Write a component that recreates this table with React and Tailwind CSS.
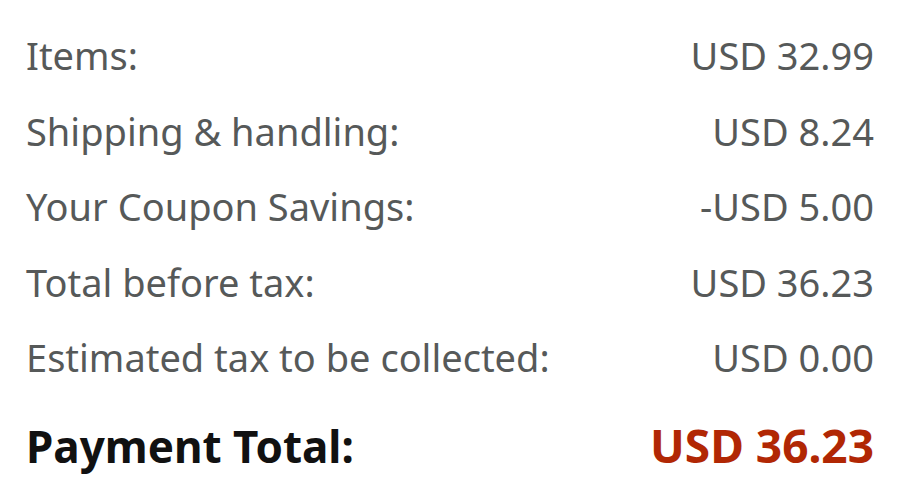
import React from "react";

const rows = [
  { label: "Items:", value: "USD 32.99" },
  { label: "Shipping & handling:", value: "USD 8.24" },
  { label: "Your Coupon Savings:", value: "-USD 5.00" },
  { label: "Total before tax:", value: "USD 36.23" },
  { label: "Estimated tax to be collected:", value: "USD 0.00" },
];

const App = () => {
  return (
    <div
      className="w-[900px] h-[500px] bg-white px-[26px] pt-[18px]"
      style={{ fontFamily: '"Noto Sans", "Open Sans", sans-serif' }}
    >
      {/* Summary rows */}
      {rows.map((row) => (
        <div
          key={row.label}
          className="flex justify-between items-center h-[75.5px] text-[38px] text-[#565959]"
        >
          <span>{row.label}</span>
          <span>{row.value}</span>
        </div>
      ))}

      {/* Total */}
      <div className="flex justify-between items-center h-[100px] text-[44px] font-bold">
        <span className="text-[#111111]">Payment Total:</span>
        <span className="text-[#b12704] text-[46px]">USD 36.23</span>
      </div>
    </div>
  );
};

export default App;
